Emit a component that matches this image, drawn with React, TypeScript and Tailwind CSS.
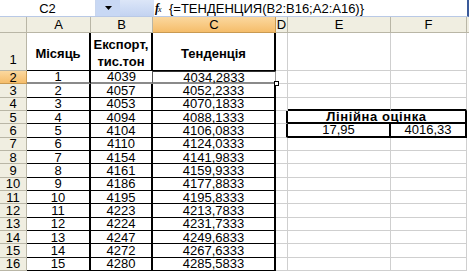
import React from "react";

const data: [number, number, string][] = [
  [1, 4039, "4034,2833"],
  [2, 4057, "4052,2333"],
  [3, 4053, "4070,1833"],
  [4, 4094, "4088,1333"],
  [5, 4104, "4106,0833"],
  [6, 4110, "4124,0333"],
  [7, 4154, "4141,9833"],
  [8, 4161, "4159,9333"],
  [9, 4186, "4177,8833"],
  [10, 4195, "4195,8333"],
  [11, 4223, "4213,7833"],
  [12, 4224, "4231,7333"],
  [13, 4247, "4249,6833"],
  [14, 4272, "4267,6333"],
  [15, 4280, "4285,5833"],
];

const rowHdr =
  "flex items-center justify-center bg-[#f0eee1] border-r border-b border-[#b9b6a6] text-black";
const colHdr =
  "flex items-center justify-center bg-[#f0eee1] border-r border-b border-[#b9b6a6]";
const grid = "border-r border-b border-[#cfcfcf] bg-white";

export default function App() {
  return (
    <div
      className="w-[469px] h-[275px] overflow-hidden bg-white text-[13px] text-black"
      style={{ fontFamily: '"Liberation Sans", Arial, sans-serif' }}
    >
      {/* Formula bar */}
      <div className="flex h-[17px] border-b border-[#b9c9e6] border-r-2 border-r-[#3a5a9a]">
        <div className="w-[96px] bg-white flex items-center justify-center leading-none border-r border-[#c9d6ee]">
          C2
        </div>
        <div className="w-[24px] bg-[#c8d8f4] flex items-center justify-center">
          <svg width="7" height="4" viewBox="0 0 7 4">
            <path d="M0 0 H7 L3.5 4 Z" fill="#000" />
          </svg>
        </div>
        <div className="w-[34px] bg-gradient-to-b from-[#dce6f8] to-[#c3d3f1]" />
        <div className="flex-1 bg-white flex items-center leading-none">
          <span className="w-[15px] flex items-end pl-[1px]">
            <span className="italic font-bold text-[12px]" style={{ fontFamily: '"Liberation Serif", serif' }}>
              f
            </span>
            <span className="italic text-[8px] -ml-[1px]" style={{ fontFamily: '"Liberation Serif", serif' }}>
              x
            </span>
          </span>
          <span className="ml-[0px]">{"{=ТЕНДЕНЦИЯ(B2:B16;A2:A16)}"}</span>
        </div>
      </div>

      {/* Sheet grid */}
      <div
        className="grid grid-cols-[27px_64px_62px_123px_12px_103px_76px_2px]"
        style={{ gridTemplateRows: "16px 38px repeat(15, 13.333px)" }}
      >
        {/* column headers */}
        <div className={colHdr} />
        <div className={colHdr}>A</div>
        <div className={colHdr}>B</div>
        <div className="flex items-center justify-center bg-gradient-to-b from-[#fbd89e] to-[#f5bd6a] border-r border-b border-[#c99a52]">
          C
        </div>
        <div className={colHdr}>D</div>
        <div className={colHdr}>E</div>
        <div className={colHdr}>F</div>
        <div className="bg-[#f0eee1] border-b border-[#b9b6a6]" />

        {/* row 1 */}
        <div className={`${rowHdr} items-end pb-[1px]`}>1</div>
        <div className="flex items-center justify-center font-bold border-r-2 border-b border-black bg-white pt-[4px]">
          Місяць
        </div>
        <div className="flex flex-col items-center justify-center font-bold border-r-2 border-b border-black bg-white leading-[17px] pt-[3px]">
          <span>Експорт,</span>
          <span>тис.тон</span>
        </div>
        <div className="flex items-center justify-center font-bold border-r-2 border-b border-black bg-white pt-[4px]">
          Тенденція
        </div>
        <div className={grid} />
        <div className={grid} />
        <div className={grid} />
        <div className="bg-white" />

        {data.map(([m, e, t], i) => {
          const r = i + 2;
          const sel = r === 2;
          const bb = sel ? "border-b-2 border-b-[#8a8a8a]" : "border-b border-b-black";
          return (
            <React.Fragment key={r}>
              <div
                className={
                  sel
                    ? "flex items-center justify-center leading-none bg-gradient-to-b from-[#fbd89e] to-[#f5bd6a] border-r border-b border-[#c99a52]"
                    : `${rowHdr} leading-none`
                }
              >
                {r}
              </div>
              <div className={`flex items-center justify-center leading-none bg-white border-r-2 border-r-black ${bb}`}>
                {m}
              </div>
              <div
                className={`flex items-center justify-center leading-none bg-white ${
                  sel ? "border-r border-r-[#555]" : "border-r-2 border-r-black"
                } ${bb}`}
              >
                {e}
              </div>
              <div
                className={`relative flex items-center justify-center leading-none bg-white ${
                  sel ? "border-r border-r-[#999] border-t border-t-[#333]" : "border-r-2 border-r-black"
                } ${bb}`}
              >
                {t}
                {sel && (
                  <span className="absolute right-[-4px] bottom-[-4px] w-[5px] h-[5px] bg-white border border-black z-10" />
                )}
              </div>
              <div
                className={`${grid} ${r === 5 || r === 6 ? "border-r-2 border-r-black" : ""}`}
              />
              {r === 5 ? (
                <div className="col-span-2 flex items-center justify-center leading-none bg-white font-bold tracking-[0.6px] border-r-2 border-b-2 border-black">
                  Лінійна оцінка
                </div>
              ) : r === 6 ? (
                <>
                  <div className="flex items-center justify-center leading-none bg-white border-r-2 border-b-2 border-black">
                    17,95
                  </div>
                  <div className="flex items-center justify-center leading-none bg-white border-r-2 border-b-2 border-black">
                    4016,33
                  </div>
                </>
              ) : (
                <>
                  <div className={`${grid} ${r === 4 ? "border-b-2 border-b-black" : ""}`} />
                  <div className={`${grid} ${r === 4 ? "border-b-2 border-b-black" : ""}`} />
                </>
              )}
              <div className="bg-white" />
            </React.Fragment>
          );
        })}
      </div>
    </div>
  );
}
